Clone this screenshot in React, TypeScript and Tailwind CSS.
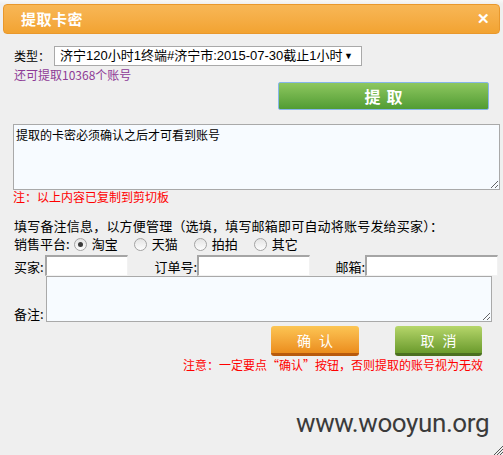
import React from 'react';

const Radio: React.FC<{ label: string; checked?: boolean }> = ({ label, checked }) => (
  <span className="flex items-center">
    <span className="w-[13px] h-[13px] rounded-full border border-[#a3a3a3] bg-gradient-to-b from-[#e4e4e4] to-[#fdfdfd] flex items-center justify-center">
      {checked && <span className="w-[5px] h-[5px] rounded-full bg-[#3a3a3a]" />}
    </span>
    <span className="ml-[5px]">{label}</span>
  </span>
);

const inset = 'shrink-0 h-[21px] bg-white border-t-2 border-l-2 border-[#a5a5a5] border-r border-b border-r-[#f2f2f2] border-b-[#f2f2f2]';

const App: React.FC = () => {
  return (
    <div className="relative w-[503px] h-[455px] overflow-hidden bg-[#efefef] text-[12px] leading-[14px] text-black font-['SimSun','Noto_Sans_CJK_SC',sans-serif]">
      <div className="h-[4px] bg-gradient-to-b from-[#f8f8f8] to-[#efefef]" />
      {/* header bar */}
      <div className="mx-[3px] h-[30px] rounded-[4px] border border-[#e9982c] bg-gradient-to-b from-[#f8b756] to-[#f2a331] flex items-center justify-between pl-[17px] pr-[9px]">
        <span className="text-white font-bold text-[15px] tracking-[0.5px]">提取卡密</span>
        <span className="text-white font-bold text-[15px] font-['Liberation_Sans',sans-serif]">✕</span>
      </div>

      <div className="px-[13px]">
        <div className="mt-[12px] flex items-center h-[20px]">
          <span className="ml-[1px] w-[40px]">类型：</span>
          <div className="w-[308px] h-[20px] bg-white border border-[#a9a9a9] flex items-center justify-between pl-[5px] pr-[8px] text-[13px] font-['Liberation_Sans','Noto_Sans_CJK_SC',sans-serif]">
            <span>济宁120小时1终端#济宁市:2015-07-30截止1小时</span>
            <span className="text-[9px]">▼</span>
          </div>
        </div>
        <div className="mt-[2px] ml-[1px] text-[#8e3b96]">还可提取10368个账号</div>

        <div className="flex justify-end mr-[1px]">
          <button className="w-[211px] h-[28px] rounded-[2px] border border-[#86b6ea] bg-gradient-to-b from-[#8dc75f] to-[#519c33] text-white font-bold text-[16px] tracking-[6px] pl-[6px]">
            提取
          </button>
        </div>

        <textarea
          readOnly
          defaultValue="提取的卡密必须确认之后才可看到账号"
          className="mt-[14px] block w-[487px] h-[66px] bg-[#f7fbff] border border-[#a9a9a9] px-[2px] py-[3px] text-[12px] leading-[14px] resize-y outline-none"
        />
        <div className="text-[#ff0000]">注：以上内容已复制到剪切板</div>

        <div className="mt-[15px] ml-[1px] text-[13px] tracking-[0.2px]">填写备注信息，以方便管理（选填，填写邮箱即可自动将账号发给买家）：</div>

        <div className="mt-[3px] ml-[1px] h-[16px] flex items-center gap-[16px] text-[13px]">
          <span className="flex items-center gap-[4px]">
            <span>销售平台:</span>
            <Radio label="淘宝" checked />
          </span>
          <Radio label="天猫" />
          <Radio label="拍拍" />
          <Radio label="其它" />
        </div>

        <div className="mt-[3px] flex items-end text-[13px]">
          <span className="shrink-0 w-[31px] ml-[1px] leading-[18px]">买家:</span>
          <div className={`w-[83px] ${inset}`} />
          <span className="shrink-0 w-[69px] text-right leading-[18px]">订单号:</span>
          <div className={`w-[113px] ${inset}`} />
          <span className="shrink-0 w-[55px] text-right leading-[18px]">邮箱:</span>
          <div className={`w-[133px] ${inset}`} />
        </div>

        <div className="flex items-end text-[13px]">
          <span className="shrink-0 w-[32px] ml-[1px] leading-[16px]">备注:</span>
          <textarea readOnly className="block shrink-0 w-[446px] h-[46px] bg-[#f7fbff] border border-[#a9a9a9] resize-y outline-none" />
        </div>

        <div className="mt-[4px] flex">
          <button className="ml-[258px] w-[88px] h-[30px] rounded-[3px] bg-gradient-to-b from-[#fcc553] to-[#eb8d1b] border-b-[3px] border-[#b85a0c] text-white text-[14px] tracking-[8px] pl-[8px]">
            确认
          </button>
          <button className="ml-[36px] w-[87px] h-[30px] rounded-[3px] bg-gradient-to-b from-[#b6d66a] to-[#6b9b2c] border-b-[3px] border-[#4b7020] text-white text-[14px] tracking-[8px] pl-[8px]">
            取消
          </button>
        </div>
        <div className="mt-[2px] pl-[170px] text-[#ff0000]">注意：一定要点“确认”按钮，否则提取的账号视为无效</div>
      </div>

      <div className="absolute left-[296px] top-[406px] text-[26px] leading-[34px] tracking-[-0.4px] text-[#3b3b3b] font-['Roboto',sans-serif]">www.wooyun.org</div>
      <svg className="absolute right-0 bottom-0" width="10" height="10" viewBox="0 0 10 10">
        <path d="M10 1 L1 10 M10 4 L4 10 M10 7 L7 10" stroke="#555" strokeWidth="1" />
      </svg>
    </div>
  );
};

export default App;
